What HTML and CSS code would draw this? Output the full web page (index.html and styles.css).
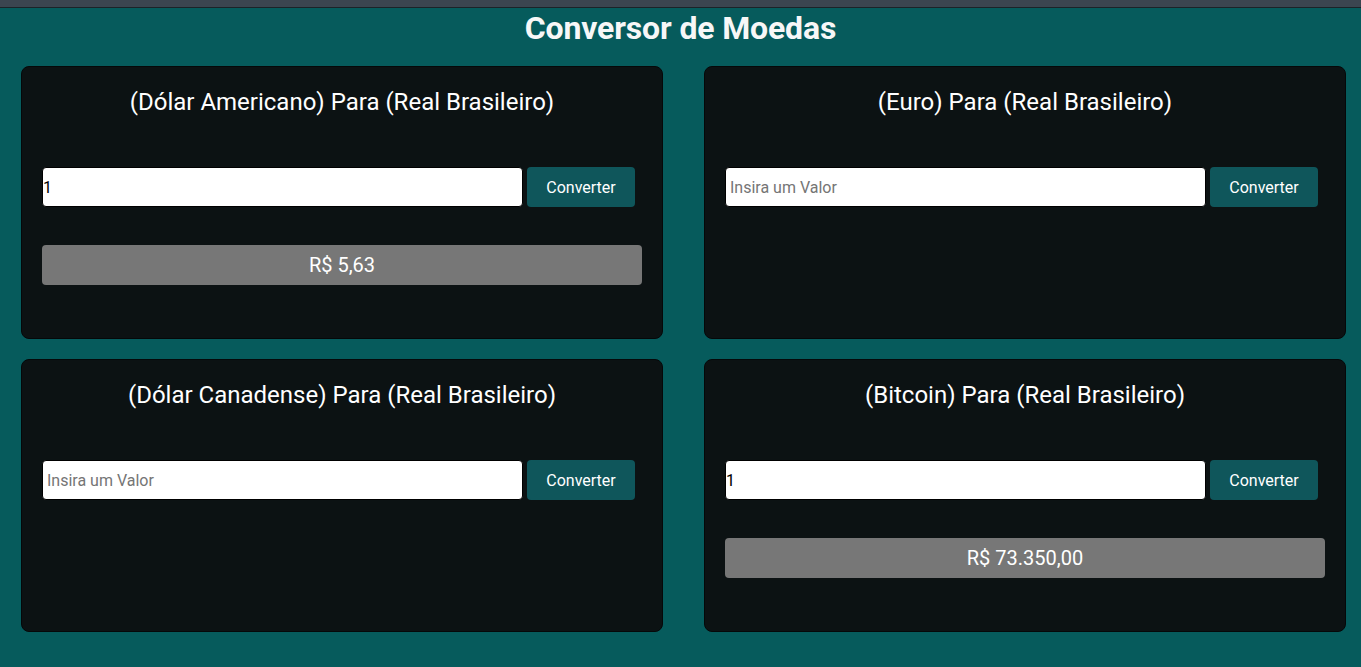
FILE: index.html
```html
<!DOCTYPE html>
<html lang="pt-BR">
<head>
<meta charset="utf-8">
<title>Conversor de Moedas</title>
<link rel="stylesheet" href="styles.css">
</head>
<body>
<div class="topbar"></div>
<h1 class="title">Conversor de Moedas</h1>
<main class="grid">
  <section class="card">
    <h2 class="card-title">(Dólar Americano) Para (Real Brasileiro)</h2>
    <div class="row">
      <input class="field" type="text" value="1" placeholder="Insira um Valor">
      <button class="btn">Converter</button>
    </div>
    <div class="result">R$ 5,63</div>
  </section>
  <section class="card">
    <h2 class="card-title">(Euro) Para (Real Brasileiro)</h2>
    <div class="row">
      <input class="field" type="text" placeholder="Insira um Valor">
      <button class="btn">Converter</button>
    </div>
  </section>
  <section class="card">
    <h2 class="card-title">(Dólar Canadense) Para (Real Brasileiro)</h2>
    <div class="row">
      <input class="field" type="text" placeholder="Insira um Valor">
      <button class="btn">Converter</button>
    </div>
  </section>
  <section class="card">
    <h2 class="card-title">(Bitcoin) Para (Real Brasileiro)</h2>
    <div class="row">
      <input class="field" type="text" value="1" placeholder="Insira um Valor">
      <button class="btn">Converter</button>
    </div>
    <div class="result">R$ 73.350,00</div>
  </section>
</main>
</body>
</html>
```
FILE: styles.css
```css
* { box-sizing: border-box; }
html, body { margin: 0; padding: 0; }
body {
  background: #065b5c;
  font-family: Roboto, "Liberation Sans", sans-serif;
  color: #fff;
  height: 667px;
  overflow: hidden;
}
.topbar {
  height: 8px;
  background: #3b4550;
  border-bottom: 1px solid #1b2329;
}
.title {
  margin: 0 0 19px;
  padding-top: 1px;
  font-size: 32px;
  font-weight: 700;
  line-height: 38px;
  text-align: center;
  color: #f7f7f7;
  letter-spacing: -0.15px;
}
.grid {
  display: grid;
  grid-template-columns: 1fr 1fr;
  column-gap: 41px;
  row-gap: 20px;
  padding: 0 15px 0 21px;
}
.card {
  background: #0c1213;
  border: 1px solid #050809;
  border-radius: 8px;
  height: 273px;
  padding: 20px;
}
.card-title {
  margin: 0;
  font-size: 24px;
  font-weight: 400;
  line-height: 30px;
  text-align: center;
}
.row {
  display: flex;
  gap: 4px;
  margin-top: 50px;
  height: 40px;
}
.field {
  width: 481px;
  height: 40px;
  border: 1px solid #000;
  border-radius: 4px;
  background: #fff;
  padding: 0;
  font-family: Roboto, "Liberation Sans", sans-serif;
  font-size: 16px;
  color: #000;
  outline: none;
}
.field:placeholder-shown { padding-left: 4px; }
.field::placeholder { color: #757575; }
.btn {
  width: 108px;
  height: 40px;
  border: none;
  border-radius: 4px;
  background: #0f565b;
  color: #fff;
  font-family: Roboto, "Liberation Sans", sans-serif;
  font-size: 16px;
  padding: 0;
}
.result {
  margin-top: 38px;
  height: 40px;
  border-radius: 4px;
  background: #777777;
  display: flex;
  align-items: center;
  justify-content: center;
  font-size: 20px;
  color: #fff;
}
```
